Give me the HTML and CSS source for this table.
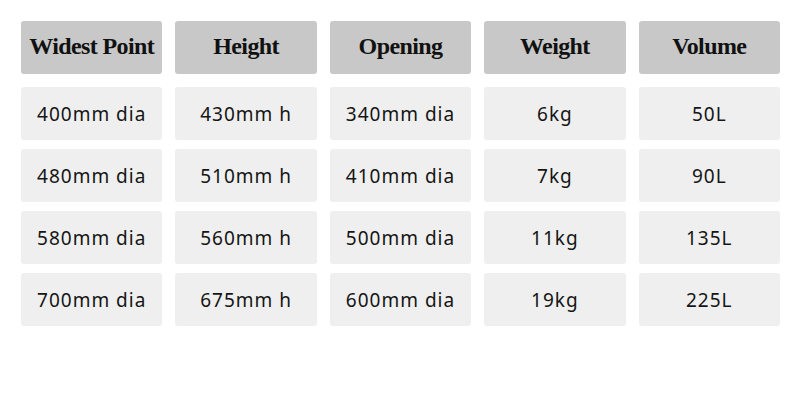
FILE: index.html
```html
<!DOCTYPE html>
<html>
<head>
<meta charset="utf-8">
<link rel="stylesheet" href="styles.css">
</head>
<body>
<div class="table">
  <div class="row head">
    <div class="cell">Widest Point</div>
    <div class="cell">Height</div>
    <div class="cell">Opening</div>
    <div class="cell">Weight</div>
    <div class="cell">Volume</div>
  </div>
  <div class="row">
    <div class="cell">400mm dia</div>
    <div class="cell">430mm h</div>
    <div class="cell">340mm dia</div>
    <div class="cell">6kg</div>
    <div class="cell">50L</div>
  </div>
  <div class="row">
    <div class="cell">480mm dia</div>
    <div class="cell">510mm h</div>
    <div class="cell">410mm dia</div>
    <div class="cell">7kg</div>
    <div class="cell">90L</div>
  </div>
  <div class="row">
    <div class="cell">580mm dia</div>
    <div class="cell">560mm h</div>
    <div class="cell">500mm dia</div>
    <div class="cell">11kg</div>
    <div class="cell">135L</div>
  </div>
  <div class="row">
    <div class="cell">700mm dia</div>
    <div class="cell">675mm h</div>
    <div class="cell">600mm dia</div>
    <div class="cell">19kg</div>
    <div class="cell">225L</div>
  </div>
</div>
</body>
</html>
```
FILE: styles.css
```css
html, body {
  margin: 0;
  padding: 0;
  background: #ffffff;
}
.table {
  width: 759px;
  padding: 21px 0 0 21px;
  display: flex;
  flex-direction: column;
  gap: 9px;
}
.row {
  display: grid;
  grid-template-columns: repeat(5, 1fr);
  column-gap: 13px;
}
.cell {
  height: 53px;
  display: flex;
  align-items: center;
  justify-content: center;
  background: #efefef;
  border-radius: 3px;
  font-family: "Noto Sans", "Liberation Sans", sans-serif;
  font-size: 19px;
  color: #151515;
  letter-spacing: 1px;
}
.head {
  margin-bottom: 4px;
}
.head .cell {
  background: #c8c8c8;
  font-family: "Liberation Serif", serif;
  font-weight: bold;
  font-size: 24px;
  letter-spacing: -0.6px;
  color: #111111;
  padding-bottom: 3px;
  box-sizing: border-box;
}
```
